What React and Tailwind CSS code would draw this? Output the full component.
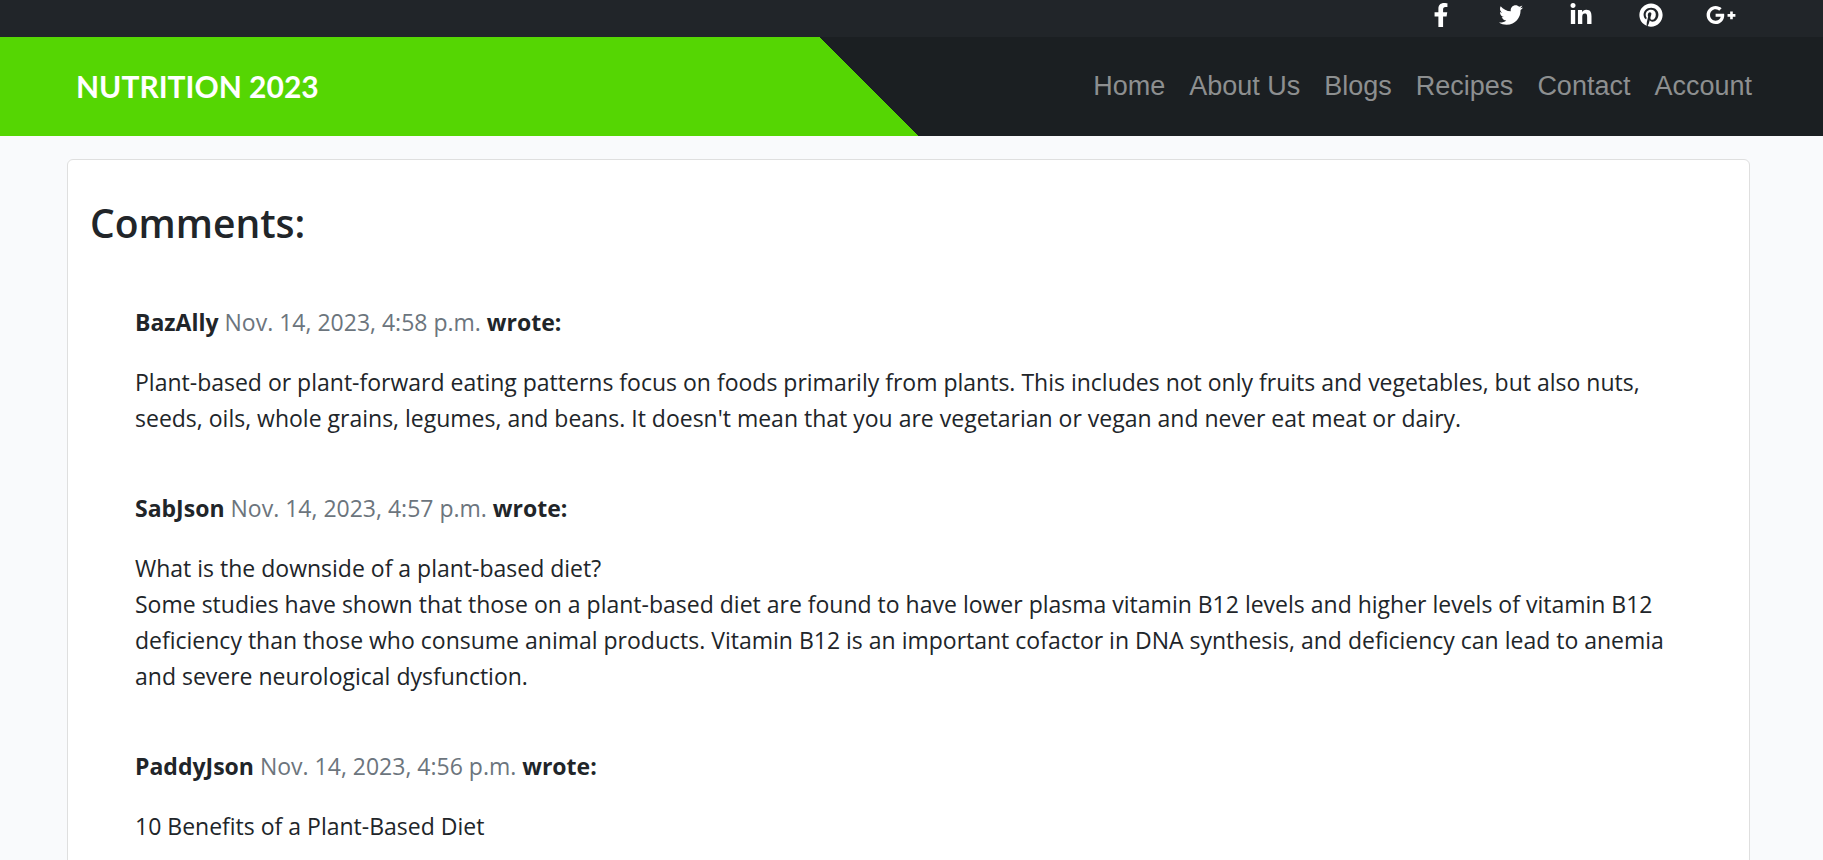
import { FaFacebookF, FaTwitter, FaLinkedinIn, FaPinterest } from "react-icons/fa";

function GooglePlusIcon({ className }) {
  return (
    <svg viewBox="0 0 640 512" fill="currentColor" className={className} aria-hidden="true">
      <path d="M386.061 228.496c1.834 9.692 3.143 19.384 3.143 31.956C389.204 370.205 315.599 448 204.8 448c-106.084 0-192-85.915-192-192s85.916-192 192-192c51.864 0 95.083 18.859 128.611 50.292l-52.126 50.03c-14.145-13.621-39.028-29.599-76.485-29.599-65.484 0-118.92 54.221-118.92 121.277 0 67.056 53.436 121.277 118.92 121.277 75.961 0 104.513-54.745 108.965-82.773H204.8v-66.009h181.261zm185.406 6.437V179.2h-56.001v55.733h-55.733v56.001h55.733v55.733h56.001v-55.733H627.2v-56.001h-55.733z" />
    </svg>
  );
}

const socials = [
  { label: "Facebook", Icon: FaFacebookF, size: "h-6 w-6" },
  { label: "Twitter", Icon: FaTwitter, size: "h-6 w-6" },
  { label: "LinkedIn", Icon: FaLinkedinIn, size: "h-6 w-6" },
  { label: "Pinterest", Icon: FaPinterest, size: "h-6 w-6" },
  { label: "Google Plus", Icon: GooglePlusIcon, size: "h-6 w-[30px]" },
];

const links = ["Home", "About Us", "Blogs", "Recipes", "Contact", "Account"];

const comments = [
  {
    author: "BazAlly",
    date: "Nov. 14, 2023, 4:58 p.m.",
    lines: [
      "Plant-based or plant-forward eating patterns focus on foods primarily from plants. This includes not only fruits and vegetables, but also nuts, seeds, oils, whole grains, legumes, and beans. It doesn't mean that you are vegetarian or vegan and never eat meat or dairy.",
    ],
  },
  {
    author: "SabJson",
    date: "Nov. 14, 2023, 4:57 p.m.",
    lines: [
      "What is the downside of a plant-based diet?",
      "Some studies have shown that those on a plant-based diet are found to have lower plasma vitamin B12 levels and higher levels of vitamin B12 deficiency than those who consume animal products. Vitamin B12 is an important cofactor in DNA synthesis, and deficiency can lead to anemia and severe neurological dysfunction.",
    ],
  },
  {
    author: "PaddyJson",
    date: "Nov. 14, 2023, 4:56 p.m.",
    lines: ["10 Benefits of a Plant-Based Diet"],
  },
];

function TopBar() {
  return (
    <div className="flex h-[37px] items-start justify-end bg-[#212529] pr-[67px] pt-[3px]">
      {socials.map(({ label, Icon, size }) => (
        <a key={label} href="#" aria-label={label} className="flex w-[70px] justify-center text-white">
          <Icon className={size} />
        </a>
      ))}
    </div>
  );
}

function NavBar() {
  return (
    <nav className="flex h-[99px] items-center justify-between bg-[linear-gradient(45deg,#55d603_47.8%,#1b1f22_47.8%)] pb-[2px] pl-[76px] pr-[59px]">
      <a href="#" className="font-['Comic_Sans_MS',Lato,sans-serif] text-[30px] font-bold leading-9 text-white">
        NUTRITION 2023
      </a>
      <ul className="flex font-['Liberation_Sans',sans-serif] text-[27px] leading-10 text-[#8d8f90]">
        {links.map((link) => (
          <li key={link}>
            <a href="#" className="px-3">
              {link}
            </a>
          </li>
        ))}
      </ul>
    </nav>
  );
}

function Comment({ author, date, lines }) {
  return (
    <article className="flex flex-col gap-6">
      <p className="font-bold">
        {author} <span className="font-normal text-[#6c757d]">{date}</span> wrote:
      </p>
      <div>
        {lines.map((line) => (
          <p key={line}>{line}</p>
        ))}
      </div>
    </article>
  );
}

export default function App() {
  return (
    <div className="min-h-screen bg-[#f9fafc] font-['Open_Sans',sans-serif] text-[#212529]">
      <header>
        <TopBar />
        <NavBar />
      </header>
      <main className="pb-6 pl-[67px] pr-[73px] pt-[23px]">
        <section className="rounded-md border border-[#dfdfdf] bg-white px-[22px] pb-12 pt-[39px]">
          <h1 className="text-[39px] font-semibold leading-[48px]">Comments:</h1>
          <div className="mt-[57px] flex flex-col gap-[54px] px-[45px] text-[23px] leading-9">
            {comments.map((comment) => (
              <Comment key={comment.author} {...comment} />
            ))}
          </div>
        </section>
      </main>
    </div>
  );
}
